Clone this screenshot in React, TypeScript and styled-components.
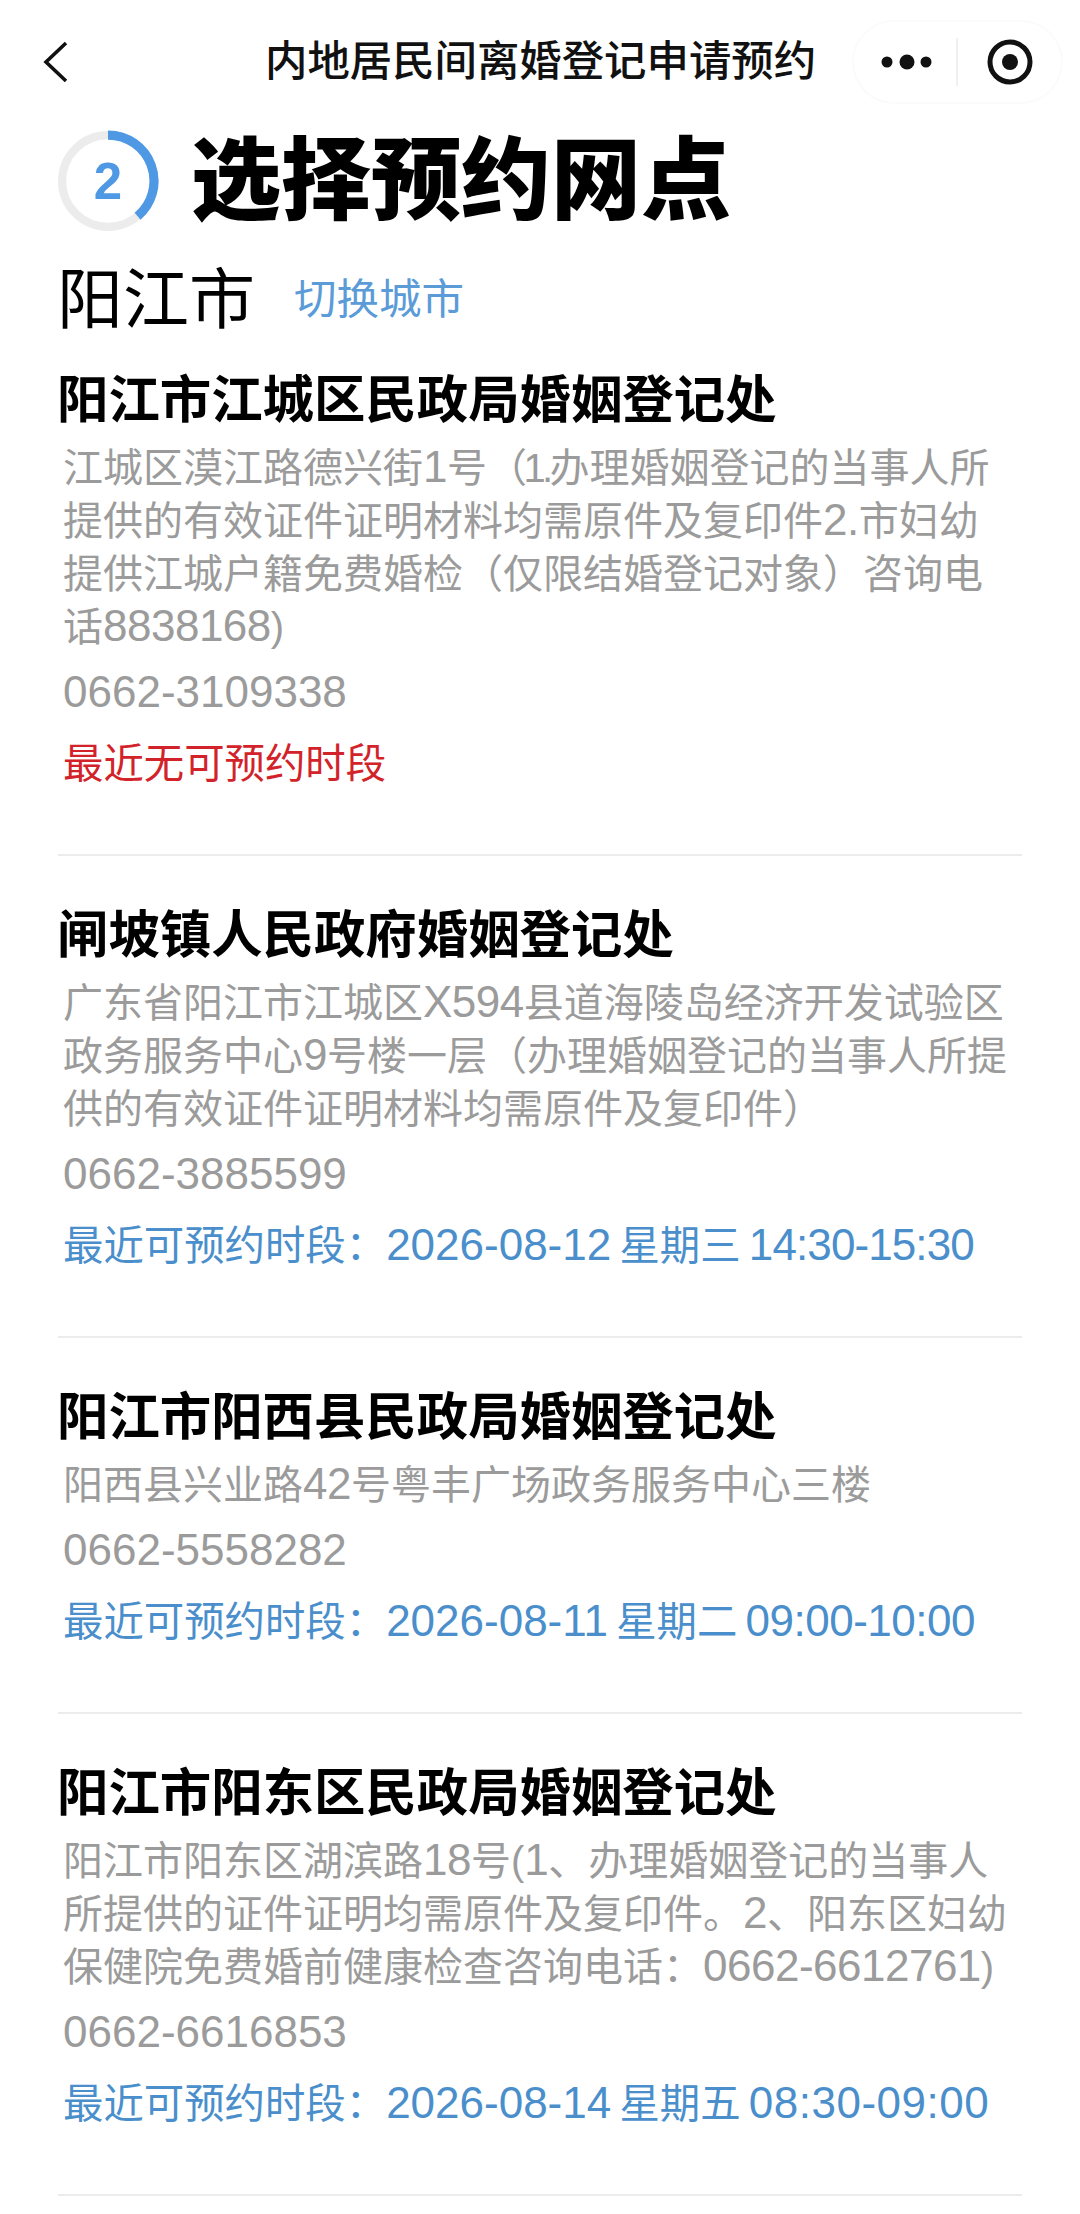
import React from "react";
import styled, { createGlobalStyle } from "styled-components";

const GlobalStyle = createGlobalStyle`
  html, body { margin: 0; padding: 0; background: #fff; }
  body { font-family: "Liberation Sans", "Noto Sans CJK SC", sans-serif; }
  * { box-sizing: border-box; }
`;

const Page = styled.div`
  width: 1080px;
  height: 2214px;
  overflow: hidden;
  background: #fff;
  color: #000;
`;

const NavBar = styled.header`
  height: 124px;
  display: flex;
  align-items: center;
  padding: 0 17px 0 43px;
`;

const BackIcon = styled.svg`
  width: 26px;
  height: 42px;
  flex: none;
`;

const NavTitle = styled.h1`
  flex: 1;
  margin: 0;
  padding-left: 196px;
  font-size: 42.4px;
  line-height: 60px;
  font-weight: 500;
  white-space: nowrap;
  color: #111;
`;

const Capsule = styled.div`
  width: 211px;
  height: 84px;
  flex: none;
  display: flex;
  align-items: center;
  border: 2px solid #fbfbfb;
  border-radius: 42px;
`;

const CapsuleMore = styled.svg`
  width: 102px;
  height: 30px;
  flex: none;
`;

const CapsuleRule = styled.span`
  width: 2px;
  height: 48px;
  flex: none;
  background: #f0f0f0;
`;

const CapsuleTarget = styled.svg`
  width: 48px;
  height: 48px;
  flex: none;
  margin-left: 28px;
`;

const StepRow = styled.section`
  display: flex;
  align-items: center;
  gap: 32px;
  height: 100px;
  margin-top: 7px;
  padding-left: 57px;
`;

const StepRing = styled.svg`
  width: 102px;
  height: 102px;
  flex: none;
`;

const StepTitle = styled.h2`
  margin: 0;
  font-size: 90px;
  line-height: 100px;
  font-weight: 900;
  white-space: nowrap;
`;

const CityRow = styled.section`
  display: flex;
  align-items: center;
  gap: 39px;
  height: 80px;
  margin-top: 29px;
  padding-left: 57px;
`;

const CityName = styled.span`
  font-size: 66px;
  line-height: 80px;
  font-weight: 400;
`;

const CitySwitch = styled.a`
  font-size: 42.5px;
  line-height: 60px;
  color: #5b9bd8;
`;

const List = styled.main`
  margin-top: 30px;
  padding: 0 58px;
`;

const Item = styled.article`
  padding-bottom: 63px;
  margin-bottom: 49px;
  border-bottom: 2px solid #ececec;
`;

const ItemTitle = styled.h3`
  margin: 0 0 0 -1px;
  font-size: 51.4px;
  line-height: 60px;
  font-weight: 700;
  white-space: nowrap;
`;

const Num = styled.span<{ $spacing?: number }>`
  font-size: 44px;
  line-height: 1;
  letter-spacing: ${(p) => p.$spacing ?? 0}px;
`;

const Address = styled.div`
  margin-top: 12px;
  padding-left: 5px;
  font-size: 40px;
  line-height: 53px;
  color: #9b9b9b;
`;

const AddressLine = styled.div`
  height: 53px;
  white-space: nowrap;
`;

const Phone = styled.div`
  height: 53px;
  margin-top: 13px;
  padding-left: 5px;
  font-size: 40px;
  line-height: 53px;
  color: #9b9b9b;
`;

const Status = styled.div<{ $none?: boolean }>`
  height: 53px;
  margin-top: 18px;
  padding-left: 5px;
  font-size: 40.4px;
  line-height: 53px;
  word-spacing: -3px;
  white-space: nowrap;
  color: ${(p) => (p.$none ? "#d3232a" : "#4a8fcb")};
`;

const TightParen = styled.span`
  letter-spacing: -3.6px;
`;

const renderText = (text: string, spacing = 0, timeSpacing = spacing) =>
  text.split(/(（1\.|[0-9A-Za-z:.\-]+)/).map((part, i) => {
    if (part === "（1.") return <TightParen key={i}>{part}</TightParen>;
    if (i % 2 === 1)
      return (
        <Num key={i} $spacing={part.includes(":") ? timeSpacing : spacing}>
          {part}
        </Num>
      );
    return part;
  });

const offices = [
  {
    name: "阳江市江城区民政局婚姻登记处",
    address: [
      "江城区漠江路德兴街1号（1.办理婚姻登记的当事人所",
      "提供的有效证件证明材料均需原件及复印件2.市妇幼",
      "提供江城户籍免费婚检（仅限结婚登记对象）咨询电",
      "话8838168)",
    ],
    phone: "0662-3109338",
    status: "最近无可预约时段",
    none: true,
    timeSpacing: 0,
  },
  {
    name: "闸坡镇人民政府婚姻登记处",
    address: [
      "广东省阳江市江城区X594县道海陵岛经济开发试验区",
      "政务服务中心9号楼一层（办理婚姻登记的当事人所提",
      "供的有效证件证明材料均需原件及复印件）",
    ],
    phone: "0662-3885599",
    status: "最近可预约时段：2026-08-12 星期三 14:30-15:30",
    timeSpacing: -0.9,
  },
  {
    name: "阳江市阳西县民政局婚姻登记处",
    address: ["阳西县兴业路42号粤丰广场政务服务中心三楼"],
    phone: "0662-5558282",
    status: "最近可预约时段：2026-08-11 星期二 09:00-10:00",
    timeSpacing: -0.5,
  },
  {
    name: "阳江市阳东区民政局婚姻登记处",
    address: [
      "阳江市阳东区湖滨路18号(1、办理婚姻登记的当事人",
      "所提供的证件证明均需原件及复印件。2、阳东区妇幼",
      "保健院免费婚前健康检查咨询电话：0662-6612761)",
    ],
    phone: "0662-6616853",
    status: "最近可预约时段：2026-08-14 星期五 08:30-09:00",
    timeSpacing: 0.5,
  },
];

export default function App() {
  return (
    <Page>
      <GlobalStyle />
      <NavBar>
        <BackIcon viewBox="0 0 26 42">
          <path d="M23 2 L3 21 L23 40" fill="none" stroke="#111" strokeWidth="3.6" />
        </BackIcon>
        <NavTitle>内地居民间离婚登记申请预约</NavTitle>
        <Capsule>
          <CapsuleMore viewBox="0 0 102 30">
            <circle cx="33" cy="15" r="5.5" fill="#111" />
            <circle cx="53" cy="15" r="7.5" fill="#111" />
            <circle cx="72" cy="15" r="5.5" fill="#111" />
          </CapsuleMore>
          <CapsuleRule />
          <CapsuleTarget viewBox="0 0 48 48">
            <circle cx="24" cy="24" r="20" fill="none" stroke="#111" strokeWidth="5" />
            <circle cx="24" cy="24" r="8" fill="#111" />
          </CapsuleTarget>
        </Capsule>
      </NavBar>
      <StepRow>
        <StepRing viewBox="0 0 100 100">
          <circle cx="50" cy="50" r="45" fill="none" stroke="#ececec" strokeWidth="8" />
          <path d="M50 5 A45 45 0 0 1 79 84.5" fill="none" stroke="#4f98e3" strokeWidth="9" />
          <text x="50" y="68" textAnchor="middle" fontSize="50" fontWeight="700" fill="#4f98e3" fontFamily="Liberation Sans, sans-serif">2</text>
        </StepRing>
        <StepTitle>选择预约网点</StepTitle>
      </StepRow>
      <CityRow>
        <CityName>阳江市</CityName>
        <CitySwitch>切换城市</CitySwitch>
      </CityRow>
      <List>
        {offices.map((o) => (
          <Item key={o.name}>
            <ItemTitle>{o.name}</ItemTitle>
            <Address>
              {o.address.map((l) => (
                <AddressLine key={l}>{renderText(l, -0.5)}</AddressLine>
              ))}
            </Address>
            <Phone>{renderText(o.phone)}</Phone>
            <Status $none={o.none}>{renderText(o.status, 0, o.timeSpacing)}</Status>
          </Item>
        ))}
      </List>
    </Page>
  );
}
